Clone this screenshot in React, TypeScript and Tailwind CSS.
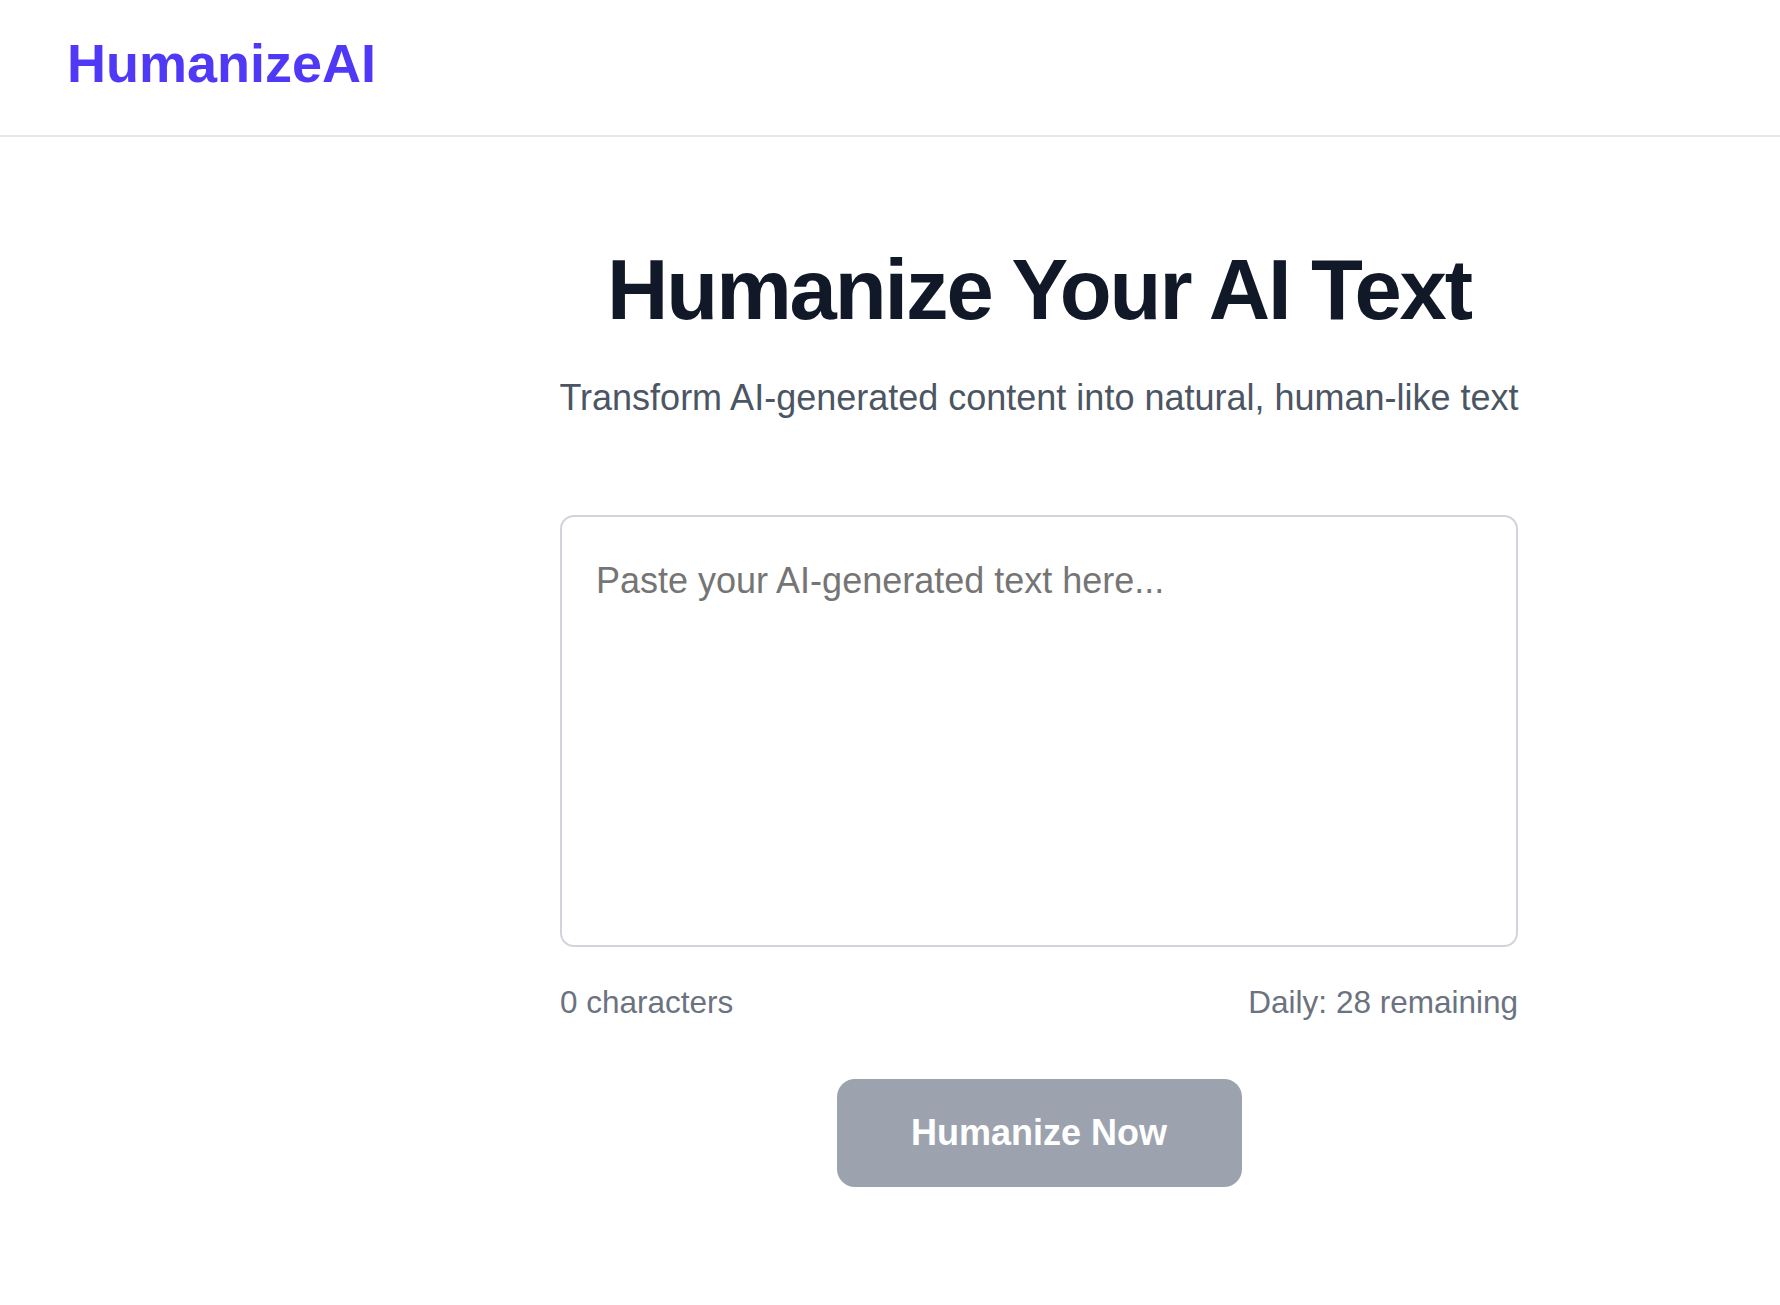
import { useState } from 'react';

export default function App() {
  const [text, setText] = useState('');
  const remaining = 28;

  return (
    <div className="min-h-screen bg-white font-['Liberation_Sans',Arial,sans-serif]">
      {/* Header */}
      <header className="h-[137px] border-b-2 border-[#e5e7eb] pl-[67px] pt-[36px]">
        <div className="text-[54px] leading-none font-bold text-[#4f39f6]">HumanizeAI</div>
      </header>

      {/* Body */}
      <div className="flex">
        <aside className="w-[298px] shrink-0" />
        <main className="flex-1 flex justify-center">
          <div className="w-[958px] flex flex-col items-center pt-[110px]">
            <h1 className="text-[85px] leading-none font-bold tracking-tight text-[#111827]">
              Humanize Your AI Text
            </h1>
            <p className="mt-[48px] text-[36px] leading-none text-[#4b5563] whitespace-nowrap">
              Transform AI-generated content into natural, human-like text
            </p>

            <textarea
              value={text}
              onChange={(e) => setText(e.target.value)}
              placeholder="Paste your AI-generated text here..."
              className="mt-[99px] w-full h-[432px] resize-none rounded-[14px] border-2 border-[#d1d5db] px-[34px] pt-[37px] pb-4 text-[36px] leading-[1.5] text-[#111827] placeholder:text-[#757575] outline-none"
            />

            <div className="mt-[40px] w-full flex justify-between text-[31.5px] leading-none text-[#6b7280]">
              <span>{text.length} characters</span>
              <span>Daily: {remaining} remaining</span>
            </div>

            <button
              disabled={!text.trim()}
              className="mt-[60px] w-[405px] h-[108px] rounded-[18px] bg-[#9ca3af] text-white text-[36px] font-bold"
            >
              Humanize Now
            </button>
          </div>
        </main>
      </div>
    </div>
  );
}
